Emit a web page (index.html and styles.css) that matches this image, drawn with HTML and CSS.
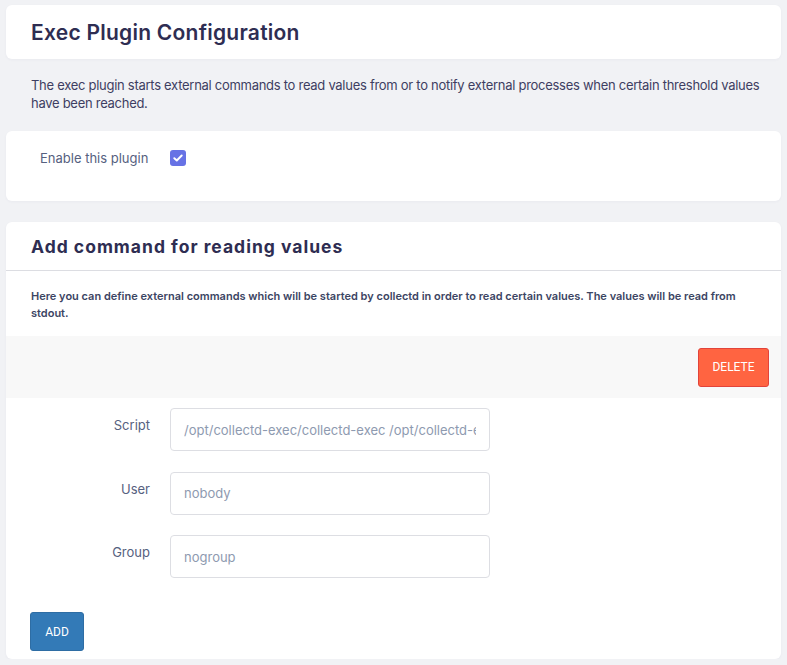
FILE: index.html
```html
<!DOCTYPE html>
<html>
<head>
<meta charset="utf-8">
<link rel="stylesheet" href="styles.css">
</head>
<body>
<div class="page">
  <div class="card title-card">
    <h1 class="title">Exec Plugin Configuration</h1>
  </div>
  <p class="intro">The exec plugin starts external commands to read values from or to notify external processes when certain threshold values have been reached.</p>
  <div class="card enable-card">
    <label class="enable-label">Enable this plugin</label>
    <span class="checkbox"><svg width="10" height="8" viewBox="0 0 10 8"><path d="M1.3 4.2 L3.8 6.5 L8.7 1.5" fill="none" stroke="#fff" stroke-width="1.9" stroke-linecap="round" stroke-linejoin="round"/></svg></span>
  </div>
  <div class="card cmd-card">
    <h2 class="cmd-title">Add command for reading values</h2>
    <p class="cmd-desc">Here you can define external commands which will be started by collectd in order to read certain values. The values will be read from stdout.</p>
    <div class="toolbar">
      <button class="btn btn-delete">DELETE</button>
    </div>
    <div class="form">
      <div class="row">
        <label class="row-label">Script</label>
        <input class="field" type="text" placeholder="/opt/collectd-exec/collectd-exec /opt/collectd-exec/config">
      </div>
      <div class="row">
        <label class="row-label">User</label>
        <input class="field" type="text" placeholder="nobody">
      </div>
      <div class="row">
        <label class="row-label">Group</label>
        <input class="field" type="text" placeholder="nogroup">
      </div>
    </div>
    <div class="footer">
      <button class="btn btn-add">ADD</button>
    </div>
  </div>
</div>
</body>
</html>
```

FILE: styles.css
```css
* { box-sizing: border-box; }
html, body { margin: 0; padding: 0; }
body {
  background: #f1f2f5;
  font-family: "Inter", "Open Sans", sans-serif;
  color: #32325d;
}
.page {
  padding: 5px 6px 0 6px;
  display: flex;
  flex-direction: column;
}
.card {
  background: #fff;
  border-radius: 6px;
  box-shadow: 0 1px 3px rgba(50, 50, 93, 0.04);
}
.title-card {
  height: 54px;
  display: flex;
  align-items: center;
  padding: 0 25px;
}
.title {
  margin: 0;
  font-size: 21px;
  font-weight: 600;
  color: #2e2d52;
  letter-spacing: 0.25px;
}
.intro {
  margin: 17px 8px 19px 25px;
  font-size: 13px;
  line-height: 18px;
  letter-spacing: -0.28px;
  color: #3e3e62;
}
.enable-card {
  height: 70px;
  display: flex;
  align-items: flex-start;
  padding: 19px 34px;
  gap: 22px;
}
.enable-label {
  font-size: 13px;
  color: #566180;
  line-height: 16px;
  padding-top: 0;
}
.checkbox {
  width: 16px;
  height: 16px;
  border-radius: 3px;
  background: #6772e5;
  display: flex;
  align-items: center;
  justify-content: center;
}
.cmd-card {
  margin-top: 21px;
  padding-bottom: 8px;
  overflow: hidden;
}
.cmd-title {
  margin: 0;
  height: 49px;
  display: flex;
  align-items: center;
  padding: 0 25px;
  font-size: 17.5px;
  font-weight: 700;
  letter-spacing: 1px;
  color: #2e2d52;
  border-bottom: 1px solid #dcdde2;
}
.cmd-desc {
  margin: 0;
  padding: 17px 25px 14px 25px;
  font-size: 11px;
  line-height: 17px;
  font-weight: 600;
  color: #3c4563;
}
.toolbar {
  background: #f8f8f8;
  height: 62px;
  display: flex;
  justify-content: flex-end;
  align-items: center;
  padding: 0 12px;
}
.btn {
  font-family: "Roboto", "Liberation Sans", sans-serif;
  font-size: 12px;
  color: #fff;
  border-radius: 3px;
  cursor: pointer;
}
.btn-delete {
  width: 71px;
  height: 39px;
  background: #ff6441;
  border: 1px solid #e2433a;
}
.form {
  display: flex;
  flex-direction: column;
  gap: 20.5px;
  padding-top: 10px;
}
.row {
  display: flex;
  align-items: flex-start;
  gap: 20px;
}
.row-label {
  width: 144px;
  text-align: right;
  font-size: 13px;
  color: #566180;
  padding-top: 9px;
}
.field {
  width: 320px;
  height: 43px;
  border: 1px solid #dddee3;
  border-radius: 4px;
  padding: 0 13px;
  font-family: "Inter", "Open Sans", sans-serif;
  font-size: 13px;
  color: #32325d;
  background: #fff;
  outline: none;
}
.field::placeholder { color: #8e9ab0; }
.footer {
  padding: 34px 24px 0 24px;
}
.btn-add {
  width: 54px;
  height: 39px;
  background: #337ab7;
  border: 1px solid #2e6da4;
}
```
